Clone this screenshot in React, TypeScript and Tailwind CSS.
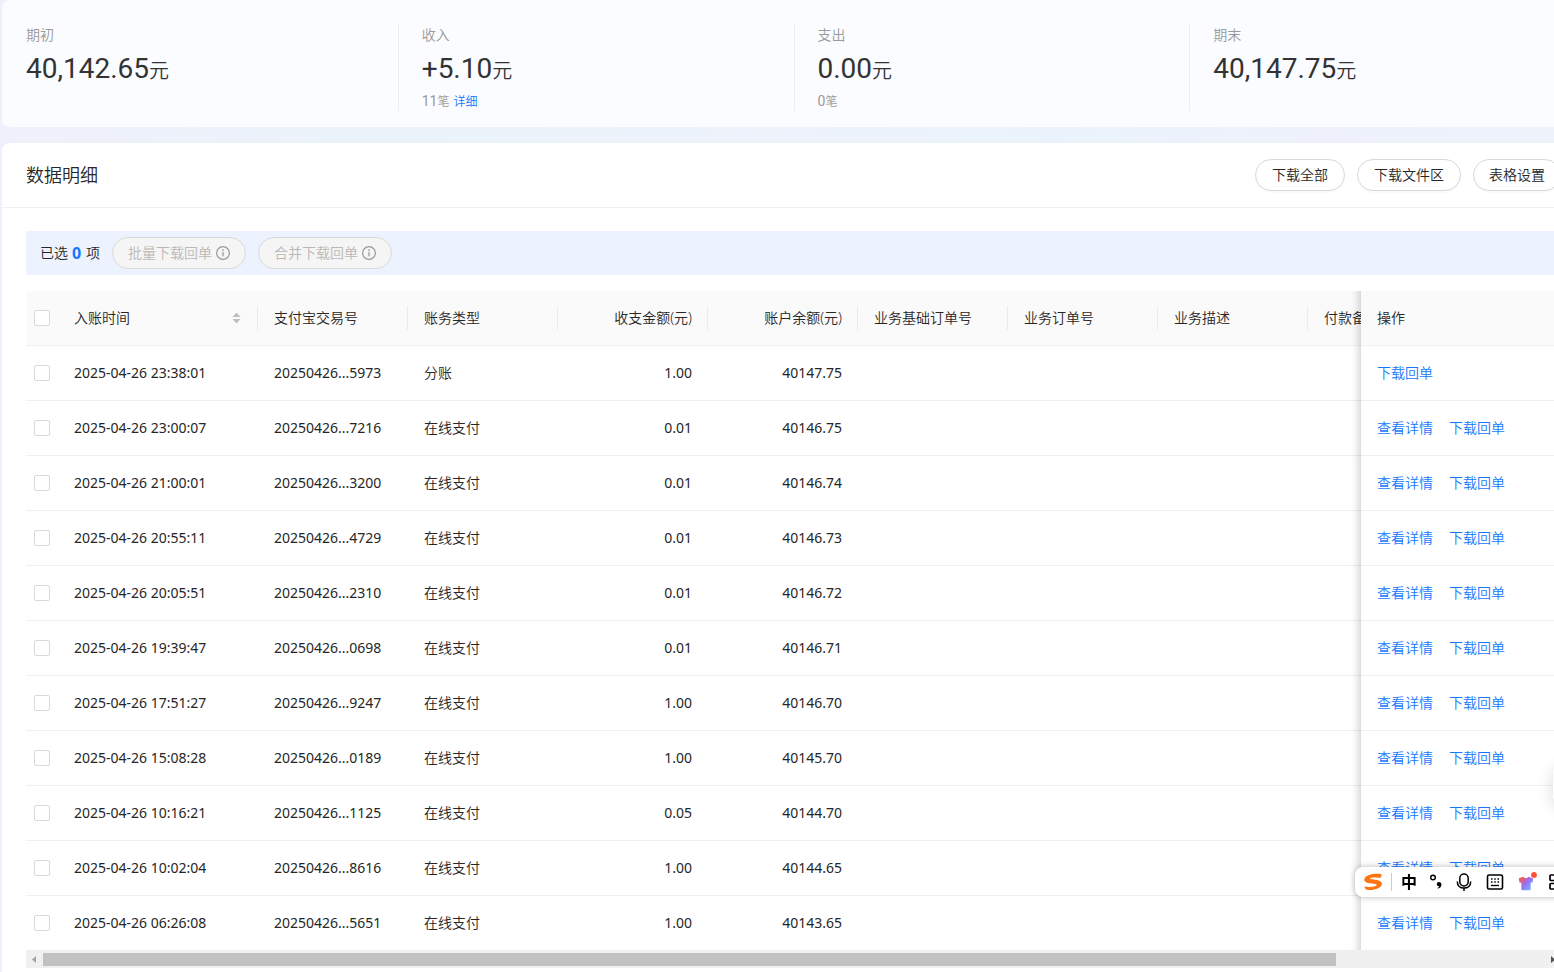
import React, { useState } from 'react';
import clsx from 'clsx';

interface Entry {
  time: string;
  tradeNo: string;
  type: string;
  amount: string;
  balance: string;
}

const ENTRIES: Entry[] = [
  { time: '2025-04-26 23:38:01', tradeNo: '20250426...5973', type: '分账', amount: '1.00', balance: '40147.75' },
  { time: '2025-04-26 23:00:07', tradeNo: '20250426...7216', type: '在线支付', amount: '0.01', balance: '40146.75' },
  { time: '2025-04-26 21:00:01', tradeNo: '20250426...3200', type: '在线支付', amount: '0.01', balance: '40146.74' },
  { time: '2025-04-26 20:55:11', tradeNo: '20250426...4729', type: '在线支付', amount: '0.01', balance: '40146.73' },
  { time: '2025-04-26 20:05:51', tradeNo: '20250426...2310', type: '在线支付', amount: '0.01', balance: '40146.72' },
  { time: '2025-04-26 19:39:47', tradeNo: '20250426...0698', type: '在线支付', amount: '0.01', balance: '40146.71' },
  { time: '2025-04-26 17:51:27', tradeNo: '20250426...9247', type: '在线支付', amount: '1.00', balance: '40146.70' },
  { time: '2025-04-26 15:08:28', tradeNo: '20250426...0189', type: '在线支付', amount: '1.00', balance: '40145.70' },
  { time: '2025-04-26 10:16:21', tradeNo: '20250426...1125', type: '在线支付', amount: '0.05', balance: '40144.70' },
  { time: '2025-04-26 10:02:04', tradeNo: '20250426...8616', type: '在线支付', amount: '1.00', balance: '40144.65' },
  { time: '2025-04-26 06:26:08', tradeNo: '20250426...5651', type: '在线支付', amount: '1.00', balance: '40143.65' },
];

const SUMMARY = [
  { label: '期初', value: '40,142.65' },
  { label: '收入', value: '+5.10', count: '11', detail: true },
  { label: '支出', value: '0.00', count: '0' },
  { label: '期末', value: '40,147.75' },
];

const COLUMNS = [
  { title: '支付宝交易号' },
  { title: '账务类型' },
  { title: '收支金额(元)', right: true },
  { title: '账户余额(元)', right: true },
  { title: '业务基础订单号' },
  { title: '业务订单号' },
  { title: '业务描述' },
  { title: '付款备注' },
];

const CELL = 'border-b border-[#f0f0f0] px-4';
const STICKY = 'sticky right-0 z-[1] before:pointer-events-none before:absolute before:-bottom-px before:-left-[30px] before:top-0 before:w-[30px] before:shadow-[inset_-10px_0_8px_-8px_rgba(0,0,0,0.2)]';

const InfoIcon = () => (
  <svg viewBox="0 0 16 16" className="h-4 w-4" fill="none" stroke="currentColor" aria-hidden="true">
    <circle cx="8" cy="8" r="6.4" strokeWidth="1.2" />
    <path d="M8 7v4.2" strokeWidth="1.3" />
    <path d="M8 4.6v1.4" strokeWidth="1.4" />
  </svg>
);

const Checkbox = ({ label, checked, onChange }: { label: string; checked: boolean; onChange: () => void }) => (
  <input
    type="checkbox"
    aria-label={label}
    checked={checked}
    onChange={onChange}
    className="block h-4 w-4 appearance-none rounded-[2px] border border-[#d9d9d9] bg-white checked:border-[#1677ff] checked:bg-[#1677ff]"
  />
);

const Summary = () => (
  <section className="grid grid-cols-4 rounded-lg bg-[#fafcff] pb-4 pt-6">
    {SUMMARY.map((s, i) => (
      <div
        key={s.label}
        className={clsx('h-[87px]', i > 0 ? 'border-l border-[#ebedf0] pl-[23px]' : 'pl-6')}
      >
        <div className="leading-[22px] text-[#999]">{s.label}</div>
        <div className="flex h-[45px] items-baseline text-[#333]">
          <span className="font-['Roboto'] text-[28px] font-normal leading-[46px]">{s.value}</span>
          <span className="text-xl">元</span>
        </div>
        {s.count && (
          <div className="text-xs leading-[22px] text-[#999]">
            <span className="font-['Roboto'] text-sm font-normal">{s.count}</span>笔
            {s.detail && <a href="#detail" className="ml-1 text-[#1677ff]">详细</a>}
          </div>
        )}
      </div>
    ))}
  </section>
);

const ImeBar = () => (
  <div className="fixed -right-5 top-[867px] z-10 flex h-[30px] w-[219px] items-center rounded-lg bg-white pl-2 text-black shadow-[0_0_6px_rgba(0,0,0,0.28)]">
    <svg viewBox="0 0 20 18" className="h-[18px] w-5" fill="#fd7412" aria-hidden="true">
      <path d="M18.600 1.200C18.700 2.600 18.200 4 17.200 4.900C14.500 4.300 7.600 4.100 7 5.400C6.700 6.700 18.800 6 18.900 10.500C19 15.600 9.500 18 3.800 16.700C2.600 16.400 1.800 15.500 1.500 13.600C5.500 14.600 13.600 13.900 13.700 11.800C13.700 10.100 1.200 11.100 1.300 6.900C1.500 1.600 12 .1 18.600 1.200z" />
    </svg>
    <span className="ml-2 h-[18px] w-px bg-[#ccc]" />
    <span className="ml-[9px] text-base font-bold leading-none">中</span>
    <svg viewBox="0 0 14 16" className="ml-3 h-4 w-[14px]" aria-hidden="true">
      <circle cx="4" cy="3.500" r="2.300" fill="none" stroke="currentColor" strokeWidth="1.400" />
      <path d="M8.800 14.500c-.4-.4-.2-.8.400-1 .8-.3 1-.8 1-1.300-1.500.1-2.400-.8-2.400-2 0-1.300 1-2.200 2.200-2.200 1.500 0 2.400 1.100 2.400 2.600 0 2.300-1.600 4.200-3.600 3.900z" fill="currentColor" />
    </svg>
    <svg viewBox="0 0 16 18" className="ml-[13px] h-[18px] w-4" fill="none" stroke="currentColor" strokeWidth="1.500" aria-hidden="true">
      <rect x="3.800" y="1" width="8.400" height="12" rx="4.200" />
      <path d="M1.300 8.500c0 4.100 2.800 6.600 6.700 6.600s6.700-2.500 6.700-6.600M8 15v3" />
    </svg>
    <svg viewBox="0 0 18 16" className="ml-[14px] h-4 w-[18px]" fill="none" stroke="currentColor" aria-hidden="true">
      <rect x="1.500" y="1" width="15" height="14" rx="1.500" strokeWidth="1.600" />
      <path d="M5 5h1.500M8.250 5h1.500M11.500 5H13M5 8h1.500M8.250 8h1.500M11.500 8H13" strokeWidth="1.500" />
      <path d="M5 11.500h8" strokeWidth="1.300" />
    </svg>
    <svg viewBox="0 0 20 20" className="ml-[14px] h-5 w-5" aria-hidden="true">
      <defs>
        <linearGradient id="shirt" x1="0" y1="0.200" x2="0.900" y2="1">
          <stop offset="0" stopColor="#ff5a3c" />
          <stop offset="0.450" stopColor="#9a6cf5" />
          <stop offset="1" stopColor="#6cc6ff" />
        </linearGradient>
      </defs>
      <path d="M.800 6.300l4.700-1.500c1 1.800 3.800 1.800 5 0l4.700 1.600-.7 4-1.800.3v6.200c0 .9-.5 1.400-1.400 1.400H4.900c-.9 0-1.500-.5-1.500-1.400v-6.200l-2-.3z" fill="url(#shirt)" />
      <circle cx="16" cy="2.900" r="2.900" fill="#ff5035" />
    </svg>
    <svg viewBox="0 0 16 16" className="ml-[11px] h-4 w-4" fill="none" stroke="currentColor" strokeWidth="1.700" aria-hidden="true">
      <rect x="1" y="1" width="5.500" height="5.500" rx="1" />
      <rect x="9.500" y="1" width="5.500" height="5.500" rx="1" />
      <rect x="1" y="9.500" width="5.500" height="5.500" rx="1" />
      <rect x="9.500" y="9.500" width="5.500" height="5.500" rx="1" />
    </svg>
  </div>
);

const App: React.FC = () => {
  const [selected, setSelected] = useState<string[]>([]);
  const all = selected.length === ENTRIES.length;

  const toggle = (id: string) =>
    setSelected(prev => (prev.includes(id) ? prev.filter(x => x !== id) : [...prev, id]));

  return (
    <div className="min-h-screen overflow-hidden bg-[linear-gradient(90deg,#eff0fb_0%,#eaf3fa_25%,#edf2fb_50%,#eaf3fb_68%,#eef1fb_85%,#edf2fb_100%)] font-['Noto_Sans','Noto_Sans_CJK_SC',sans-serif] text-sm font-[350] text-[#262626]">
      <main className="flex min-h-screen w-[calc(100%+31px)] flex-col gap-4 pl-0.5">
        <Summary />

        <section className="flex-1 rounded-t-lg bg-white">
          <header className="flex h-[65px] items-center justify-between border-b border-[#f0f0f0] px-6">
            <h2 className="text-lg font-[350]">数据明细</h2>
            <div className="flex gap-3">
              {['下载全部', '下载文件区', '表格设置'].map(t => (
                <button key={t} type="button" className="h-8 rounded-full border border-[#d9d9d9] bg-white px-4 shadow-[0_2px_0_rgba(0,0,0,0.02)] last:px-[15px]">
                  {t}
                </button>
              ))}
            </div>
          </header>

          <div className="px-6 pt-[23px]">
            <div className="mb-4 flex h-11 items-center gap-3 bg-[#ecf3ff] pl-[14px]">
              <div className="flex items-center gap-1">
                <span>已选</span>
                <b className="w-[10px] text-base leading-none text-[#1677ff]">{selected.length}</b>
                <span>项</span>
              </div>
              {['批量下载回单', '合并下载回单'].map(t => (
                <button key={t} type="button" disabled={!selected.length} className="flex h-8 w-[134px] items-center gap-[3px] rounded-full border border-[#d9d9d9] bg-[#f5f5f5] pl-[15px] text-[#b8b8b8]">
                  {t}
                  <span className="text-[#999]"><InfoIcon /></span>
                </button>
              ))}
            </div>

            <div className="overflow-x-auto [scrollbar-width:none]">
              <table className="w-[1782px] table-fixed border-separate border-spacing-0 text-left">
                <colgroup>
                  <col className="w-8" />
                  <col className="w-[200px]" />
                  {COLUMNS.map(c => <col key={c.title} className="w-[150px]" />)}
                  <col className="w-[150px]" />
                  <col className="w-[200px]" />
                </colgroup>
                <thead>
                  <tr className="h-[55px] bg-[#fafafa]">
                    <th className="border-b border-[#f0f0f0] px-2">
                      <Checkbox label="全选" checked={all} onChange={() => setSelected(all ? [] : ENTRIES.map(e => e.time))} />
                    </th>
                    <th className="border-b border-[#f0f0f0] pl-4 font-[350]">
                      <div className="flex h-6 items-center justify-between border-r border-[#ebebeb] pr-4">
                        入账时间
                        <svg viewBox="0 0 9 12" className="h-3 w-[9px] fill-[#bfbfbf]" aria-hidden="true">
                          <path d="M4.500 0.500L8.500 5h-8zM4.500 11.500L8.500 7h-8z" />
                        </svg>
                      </div>
                    </th>
                    {COLUMNS.map(c => (
                      <th key={c.title} className="border-b border-[#f0f0f0] pl-4 font-[350]">
                        <div className={clsx('h-6 border-r border-[#ebebeb] pr-[15px] leading-6', c.right && 'text-right')}>{c.title}</div>
                      </th>
                    ))}
                    <th className={CELL} />
                    <th className={clsx(CELL, STICKY, 'bg-[#fafafa] font-[350]')}>操作</th>
                  </tr>
                </thead>
                <tbody>
                  {ENTRIES.map((e, i) => (
                    <tr key={e.time} className="h-[55px] last:h-[54px] last:[&>td]:border-b-0">
                      <td className="border-b border-[#f0f0f0] px-2">
                        <Checkbox label={e.time} checked={selected.includes(e.time)} onChange={() => toggle(e.time)} />
                      </td>
                      <td className={clsx(CELL, 'font-normal')}>{e.time}</td>
                      <td className={clsx(CELL, 'font-normal')}>{e.tradeNo}</td>
                      <td className={CELL}>{e.type}</td>
                      <td className={clsx(CELL, 'text-right font-normal')}>{e.amount}</td>
                      <td className={clsx(CELL, 'text-right font-normal')}>{e.balance}</td>
                      <td className={CELL} colSpan={5} />
                      <td className={clsx(CELL, STICKY, 'bg-white')}>
                        <div className="flex gap-4 text-[#1677ff]">
                          {i > 0 && <a href="#view">查看详情</a>}
                          <a href="#receipt">下载回单</a>
                        </div>
                      </td>
                    </tr>
                  ))}
                </tbody>
              </table>
            </div>

            {/* horizontal scrollbar */}
            <div className="flex h-[18px] items-center bg-[#f0f0f0]">
              <svg viewBox="0 0 17 17" className="h-[17px] w-[17px] shrink-0 fill-[#a3a3a3]" aria-hidden="true"><path d="M10 5v7L6 8.500z" /></svg>
              <div className="h-[13px] flex-1">
                <div className="h-full w-[86.14%] bg-[#c1c1c1]" />
              </div>
              <svg viewBox="0 0 17 17" className="h-[17px] w-[17px] shrink-0 fill-[#505050]" aria-hidden="true"><path d="M7 5v7l4-3.500z" /></svg>
            </div>
          </div>
        </section>
      </main>

      {/* side drawer handle peeking in from the edge */}
      <div className="fixed -right-9 top-[764px] z-10 h-10 w-[37px] rounded-lg bg-white shadow-[0_4px_16px_rgba(0,0,0,0.15)]" />
      <ImeBar />
    </div>
  );
};

export default App;
